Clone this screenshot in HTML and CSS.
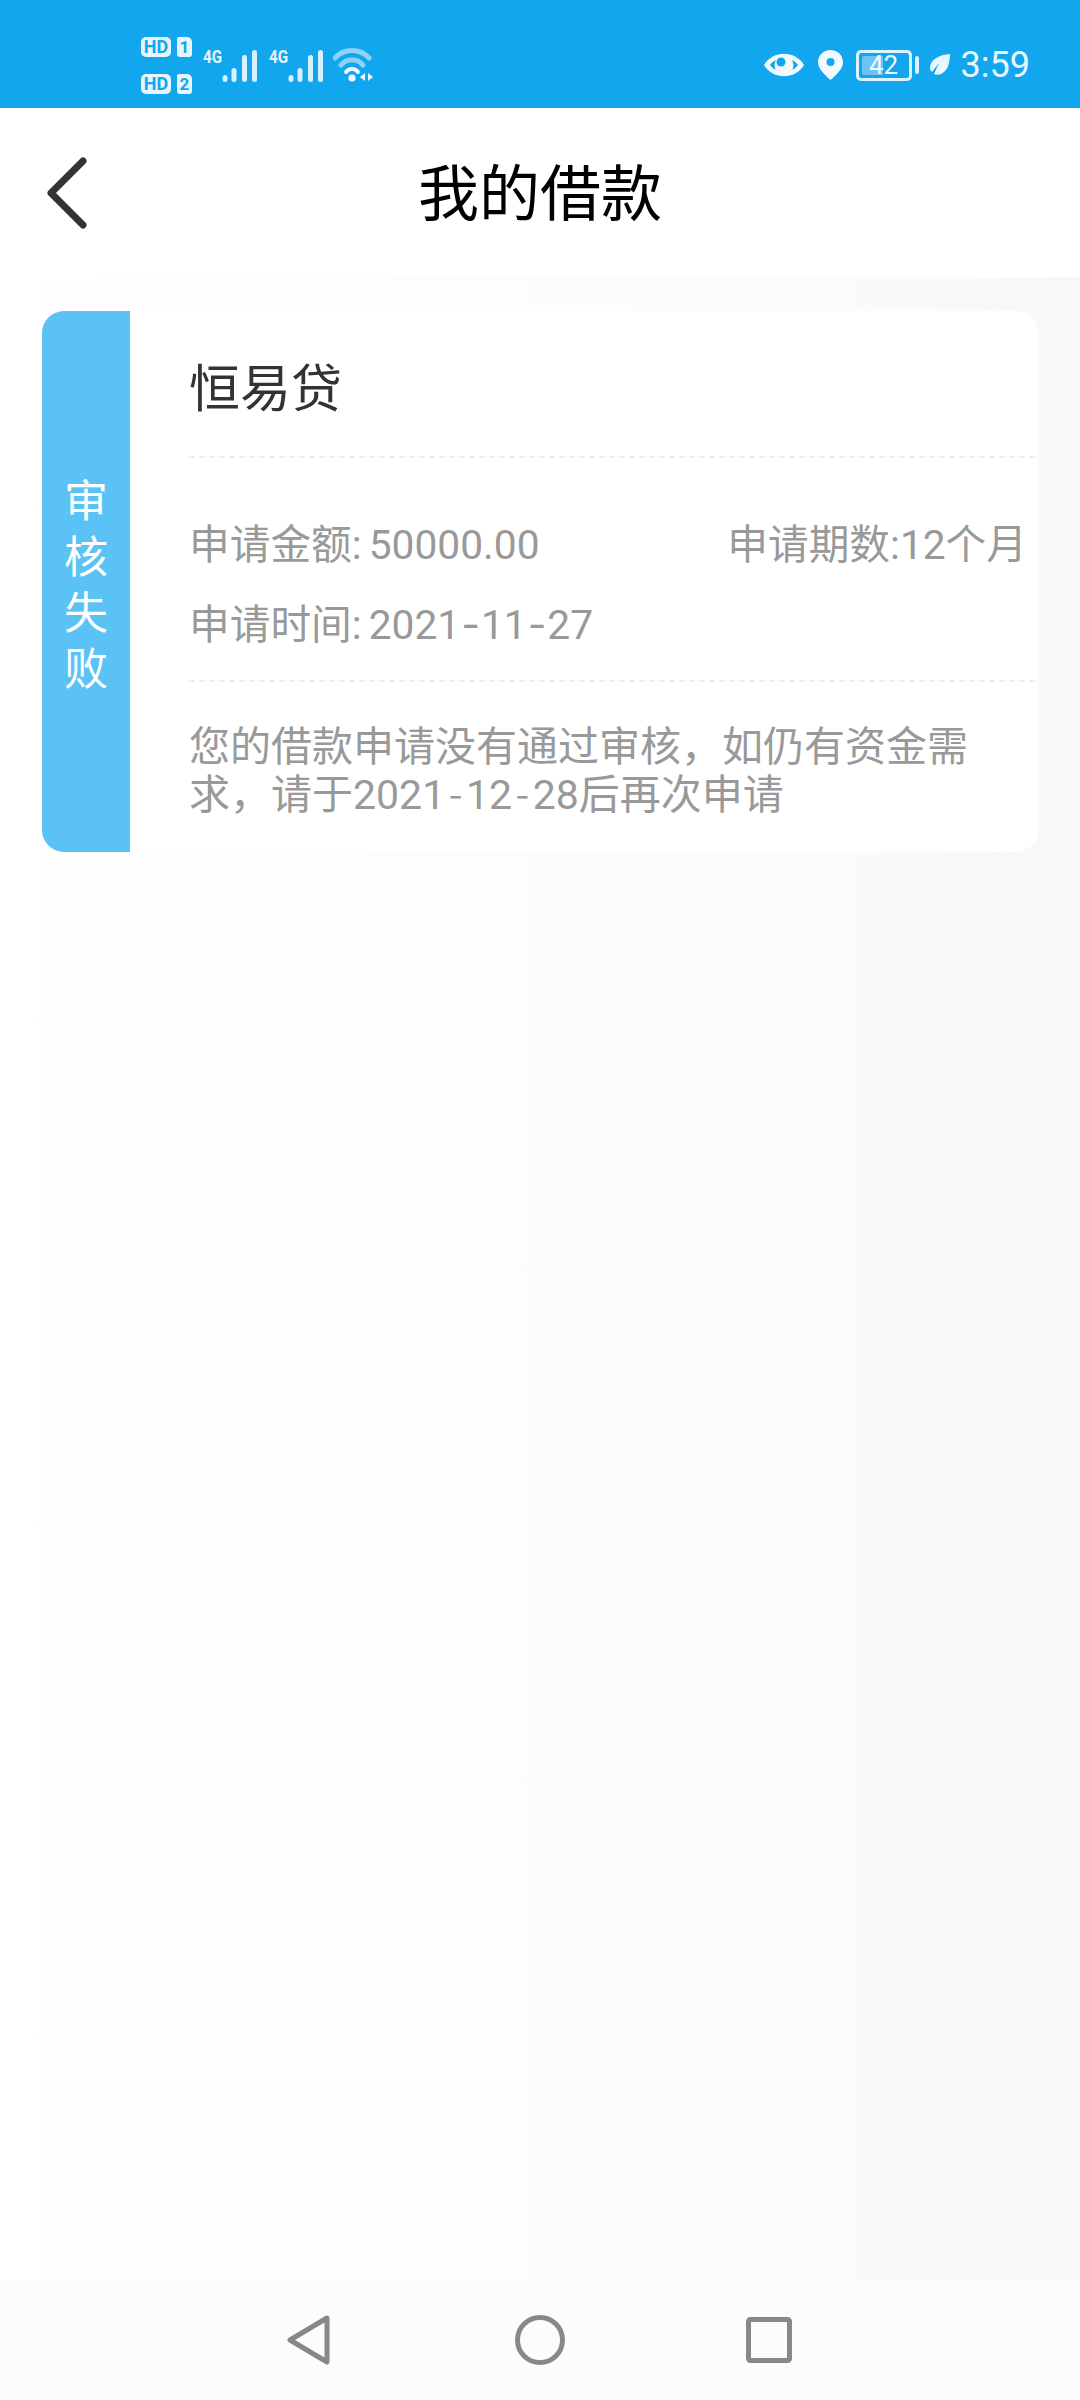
FILE: index.html
```html
<!DOCTYPE html>
<html lang="zh-CN">
<head>
<meta charset="utf-8">
<title>我的借款</title>
<link rel="stylesheet" href="styles.css">
</head>
<body>
<div class="screen">
  <div class="status">
    <div class="status-left">
      <div class="sims">
        <div class="sim"><span class="hd">HD</span><span class="slot">1</span></div>
        <div class="sim"><span class="hd">HD</span><span class="slot">2</span></div>
      </div>
      <div class="nets">
        <div class="net">
          <span class="g">4G</span>
          <svg class="bars" viewBox="0 0 35 33"><g fill="#d9f0fd"><rect x="0.500" y="26" width="5" height="7" rx="2.500"/><rect x="9.500" y="19" width="5" height="14" rx="2.500"/><rect x="20" y="6" width="5" height="27" rx="2.500"/><rect x="30" y="1" width="5" height="32" rx="2.500"/></g></svg>
        </div>
        <div class="net">
          <span class="g">4G</span>
          <svg class="bars" viewBox="0 0 35 33"><g fill="#d9f0fd"><rect x="0.500" y="26" width="5" height="7" rx="2.500"/><rect x="9.500" y="19" width="5" height="14" rx="2.500"/><rect x="20" y="6" width="5" height="27" rx="2.500"/><rect x="30" y="1" width="5" height="32" rx="2.500"/></g></svg>
        </div>
      </div>
      <svg class="wifi" viewBox="0 0 42 34">
        <path d="M2 10C11 0 27 0 36 10" fill="none" stroke="#8fd2f7" stroke-width="5" stroke-linecap="round"/>
        <path d="M8 17C14 10 24 10 30 17" fill="none" stroke="#8fd2f7" stroke-width="5" stroke-linecap="round"/>
        <path d="M13 24C16 20 22 20 25 24" fill="none" stroke="#eef9ff" stroke-width="4" stroke-linecap="round"/>
        <circle cx="19" cy="30" r="3.600" fill="#eef9ff"/>
        <path d="M32 25v8l-5-4zM35 25v8l5-4z" fill="#eef9ff"/>
      </svg>
    </div>
    <div class="status-right">
      <svg class="eye" viewBox="0 0 42 28">
        <path d="M1 14C10 -1 32 -1 41 14C32 29 10 29 1 14Z" fill="#f2faff"/>
        <path d="M7 14C13 5 29 5 35 14C29 23 13 23 7 14Z" fill="#12a6ee"/>
        <circle cx="21" cy="14" r="9.500" fill="#f2faff"/>
        <circle cx="18" cy="11" r="4.500" fill="#12a6ee"/>
      </svg>
      <svg class="pin" viewBox="0 0 25 30">
        <path d="M12.500 0C5.600 0 0 5.400 0 12.200C0 19 7 25 12.500 30C18 25 25 19 25 12.200C25 5.400 19.400 0 12.500 0Z" fill="#f2faff"/>
        <circle cx="12.500" cy="12" r="4" fill="#12a6ee"/>
      </svg>
      <div class="battery">
        <div class="cell"><span class="level">42</span></div>
        <span class="nub"></span>
      </div>
      <svg class="leaf" viewBox="0 0 22 22">
        <path d="M21 0C10 1 2 5 1 13C1 15 1.500 17 3 18L10 9L5 20C7 21 10 21 12 20C19 17 21 8 21 0Z" fill="#e8f6fe"/>
      </svg>
      <span class="time">3:59</span>
    </div>
  </div>

  <header class="topbar">
    <svg class="back" viewBox="0 0 44 72">
      <path d="M38 4L6 36L38 68" fill="none" stroke="#333" stroke-width="7" stroke-linecap="round" stroke-linejoin="round"/>
    </svg>
    <h1 class="title">我的借款</h1>
  </header>

  <main class="content">
    <article class="card">
      <div class="stripe"><span>审</span><span>核</span><span>失</span><span>败</span></div>
      <div class="body">
        <div class="name">恒易贷</div>
        <div class="facts">
          <div class="row"><span>申请金额: 50000.00</span><span>申请期数:12个月</span></div>
          <div class="row"><span>申请时间: 2021<span class="dash">-</span>11<span class="dash">-</span>27</span></div>
        </div>
        <div class="note">
          <div class="line">您的借款申请没有通过审核&#xFF0C;如仍有资金需</div>
          <div class="line">求&#xFF0C;请于2021<span class="dash">-</span>12<span class="dash">-</span>28后再次申请</div>
        </div>
      </div>
    </article>
  </main>

  <nav class="navbar">
    <svg class="nav-back" viewBox="0 0 44 50"><path d="M40 3L3 25L40 47Z" fill="none" stroke="#888" stroke-width="5" stroke-linejoin="round"/></svg>
    <svg class="nav-home" viewBox="0 0 50 50"><circle cx="25" cy="25" r="22.500" fill="none" stroke="#888" stroke-width="5"/></svg>
    <svg class="nav-recent" viewBox="0 0 46 46"><rect x="2.500" y="2.500" width="41" height="41" rx="2" fill="none" stroke="#888" stroke-width="5"/></svg>
  </nav>
</div>
</body>
</html>
```

FILE: styles.css
```css
* { box-sizing: border-box; }
html, body { margin: 0; padding: 0; }
body { font-family: Roboto, "Noto Sans CJK SC", sans-serif; }

.screen {
  width: 1080px;
  height: 2400px;
  display: flex;
  flex-direction: column;
  background: linear-gradient(90deg, #ffffff 0%, #fdfdfd 35%, #fcfcfc 60%, #f9f9f9 90%, #f8f8f8 100%);
}

/* status bar */
.status {
  height: 108px;
  flex: none;
  background: #12a6ee;
  display: flex;
  justify-content: space-between;
  align-items: center;
  padding: 22px 50px 0 141px;
  color: #eef9ff;
}
.status-left { display: flex; align-items: center; }
.sims { display: flex; flex-direction: column; gap: 17px; }
.sim { display: flex; gap: 6px; }
.hd {
  width: 30px; height: 20px;
  background: #e6f5fe;
  color: #12a6ee;
  border-radius: 5px;
  font: 700 18px/20px Roboto, sans-serif;
  text-align: center;
}
.slot {
  width: 15px; height: 20px;
  background: #e6f5fe;
  color: #12a6ee;
  border-radius: 2px 5px 3px 3px;
  font: 700 17px/20px Roboto, sans-serif;
  text-align: center;
}
.nets { display: flex; margin-left: 11px; }
.net { display: flex; align-items: flex-start; height: 33px; width: 66px; }
.g {
  width: 20px;
  font: 700 19px/15px Roboto, sans-serif;
  color: #e6f5fe;
  transform: scaleX(0.8);
  transform-origin: left top;
}
.bars { width: 35px; height: 33px; margin-left: -1px; }
.wifi { width: 42px; height: 34px; margin-left: -2px; }

.status-right { display: flex; align-items: center; }
.eye { width: 42px; height: 28px; }
.pin { width: 25px; height: 30px; margin-left: 13px; }
.battery { display: flex; align-items: center; gap: 3px; margin-left: 13px; }
.cell {
  width: 56px; height: 31px;
  border: 3px solid #dff3fe;
  border-radius: 5px;
  padding: 3px;
  display: flex;
}
.level {
  flex: 1;
  background: linear-gradient(90deg, #6cc4f4 0 48%, transparent 48%);
  border-radius: 2px;
  color: #eef9ff;
  font: 400 26px/19px Roboto, sans-serif;
  text-align: center;
}
.nub { width: 4px; height: 18px; background: #dff3fe; border-radius: 2px; }
.leaf { width: 22px; height: 22px; margin-left: 10px; }
.time { font: 400 36px/40px Roboto, sans-serif; margin-left: 10px; color: #e8f6fe; }

/* header */
.topbar {
  height: 169px;
  flex: none;
  background: #fff;
  position: relative;
  display: flex;
  align-items: center;
  justify-content: center;
}
.back { position: absolute; left: 45px; top: 49px; width: 44px; height: 72px; }
.title { margin: 4px 0 0; font-size: 61px; line-height: 70px; font-weight: 400; color: #000; }

/* card */
.content { flex: 1; padding: 34px 42px 0; }
.card {
  height: 541px;
  display: flex;
  background: #fff;
  border-radius: 22px;
  overflow: hidden;
}
.stripe {
  width: 88px;
  flex: none;
  background: #5bc2f5;
  color: #fff;
  font-size: 44px;
  line-height: 56px;
  padding-top: 8px;
  display: flex;
  flex-direction: column;
  align-items: center;
  justify-content: center;
}
.body { flex: 1; padding-left: 59px; padding-right: 3px; }
.name {
  height: 147px;
  padding-top: 50px;
  font-size: 51px;
  line-height: 58px;
  color: #333;
  border-bottom: 2px dashed #eeeeee;
}
.facts {
  height: 224px;
  padding: 47px 8px 0 0;
  border-bottom: 2px dashed #eeeeee;
}
.row {
  height: 80px;
  line-height: 80px;
  font-size: 40.700px;
  word-spacing: -3px;
  color: #999;
  display: flex;
  justify-content: space-between;
}
.note {
  padding-top: 41px;
  font-size: 41px;
  color: #999;
}
.line { height: 48px; line-height: 48px; white-space: nowrap; }
.dash {
  font-family: Inter, sans-serif;
  padding: 0 1px;
}
.note .dash {
  font-size: 32px;
  padding: 0 3px;
  vertical-align: 2px;
}

/* navigation bar */
.navbar {
  height: 120px;
  flex: none;
  background: #fcfcfc;
  display: flex;
  align-items: center;
  position: relative;
}
.nav-back { width: 44px; height: 50px; margin-left: 287px; }
.nav-home { width: 50px; height: 50px; margin-left: 184px; }
.nav-recent { width: 46px; height: 46px; margin-left: 181px; }
```
